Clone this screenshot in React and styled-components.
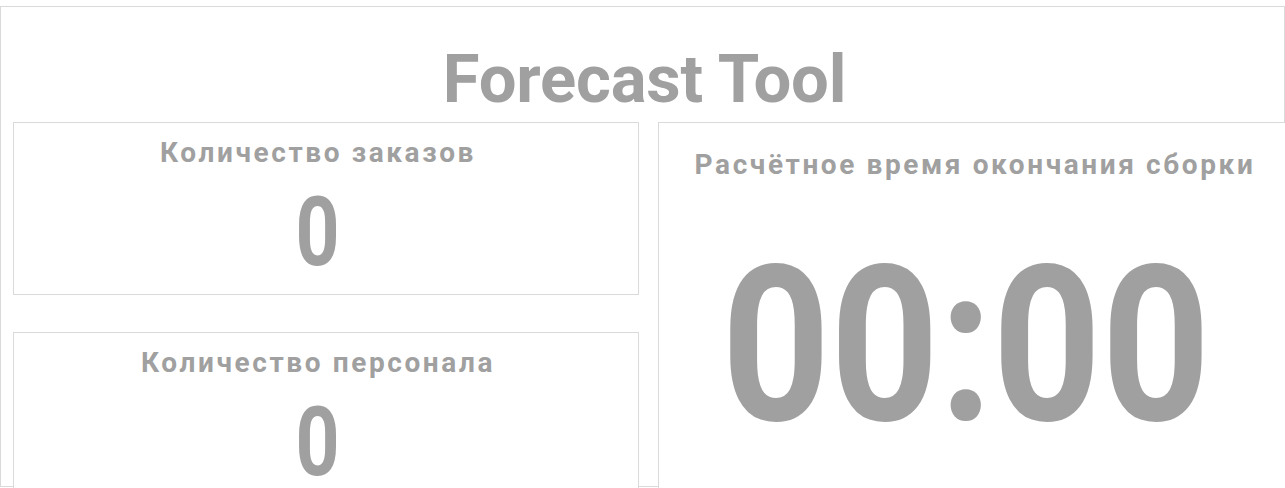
import React from "react";
import styled, { createGlobalStyle } from "styled-components";

const GlobalStyle = createGlobalStyle`
  html, body {
    margin: 0;
    padding: 0;
    background: #fff;
    overflow: hidden;
  }
  body {
    font-family: Roboto, "Liberation Sans", sans-serif;
  }
`;

const Page = styled.div`
  width: 1285px;
  height: 488px;
  padding-top: 6px;
  box-sizing: border-box;
`;

const Frame = styled.div`
  box-sizing: border-box;
  width: 1285px;
  height: 481px;
  border: 1px solid #dadada;
`;

const Title = styled.h1`
  box-sizing: border-box;
  height: 115px;
  margin: 0;
  padding: 39px 0 0 4px;
  text-align: center;
  font-size: 67px;
  line-height: 67px;
  font-weight: 700;
  color: #a0a0a0;
  letter-spacing: -0.2px;
`;

const Grid = styled.div`
  display: grid;
  grid-template-columns: 626px 650px;
  column-gap: 19px;
  padding-left: 12px;
  align-items: start;
`;

const Column = styled.div`
  display: flex;
  flex-direction: column;
  gap: 37px;
`;

const Card = styled.div`
  box-sizing: border-box;
  height: ${(p) => p.$height}px;
  padding: ${(p) => p.$padTop}px 16px 0 0;
  background: #fff;
  border: 1px solid #dadada;
  display: flex;
  flex-direction: column;
  align-items: center;
  color: #a0a0a0;
`;

const Label = styled.div`
  font-size: 28px;
  line-height: 28px;
  font-weight: 700;
  letter-spacing: 2.6px;
  white-space: nowrap;
`;

// DIN-like digits: Roboto squeezed horizontally
const Value = styled.div`
  margin: ${(p) => p.$gap}px ${(p) => p.$offset || 0}px 0 0;
  font-size: ${(p) => p.$size}px;
  line-height: ${(p) => p.$size}px;
  font-weight: 700;
  white-space: nowrap;
  transform: scaleX(${(p) => p.$squeeze || 1});
`;

function KpiCard({ label, value }) {
  return (
    <Card $height={173} $padTop={16}>
      <Label>{label}</Label>
      <Value $size={96} $gap={17} $squeeze={0.8}>
        {value}
      </Value>
    </Card>
  );
}

export default function App() {
  return (
    <>
      <GlobalStyle />
      <Page>
        <Frame>
          <Title>Forecast Tool</Title>
          <Grid>
            <Column>
              <KpiCard label="Количество заказов" value="0" />
              <KpiCard label="Количество персонала" value="0" />
            </Column>
            <Card $height={380} $padTop={28}>
              <Label>Расчётное время окончания сборки</Label>
              <Value $size={218} $gap={58} $squeeze={0.87} $offset={18}>
                00:00
              </Value>
            </Card>
          </Grid>
        </Frame>
      </Page>
    </>
  );
}
